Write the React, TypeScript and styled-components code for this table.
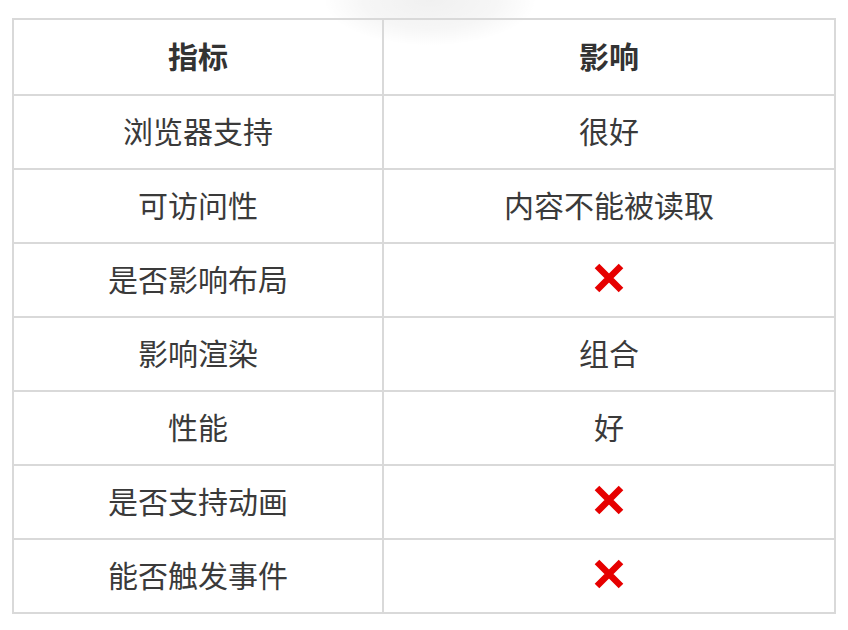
import * as React from 'react';
import styled, { createGlobalStyle } from 'styled-components';

const GlobalStyle = createGlobalStyle`
  html, body {
    margin: 0;
    padding: 0;
    background: #fff;
  }
  body {
    font-family: "Noto Sans CJK SC", "Noto Sans", sans-serif;
  }
`;

const Page = styled.div`
  position: relative;
  padding: 18px 12px 0 12px;
  width: 848px;
  box-sizing: border-box;
`;

// faint blurred shadow that peeks in at the top of the shot
const Glow = styled.div`
  position: absolute;
  left: 325px;
  top: -45px;
  width: 210px;
  height: 90px;
  border-radius: 50%;
  background: radial-gradient(ellipse at center, rgba(0, 0, 0, 0.06) 0%, rgba(0, 0, 0, 0.035) 45%, rgba(0, 0, 0, 0) 72%);
  pointer-events: none;
`;

const Table = styled.div`
  position: relative;
  display: grid;
  grid-template-columns: 370px 452px;
  width: 824px;
  box-sizing: border-box;
  border-top: 2px solid #d9d9d9;
  border-left: 2px solid #d9d9d9;
`;

const Cell = styled.div<{ $head?: boolean }>`
  display: flex;
  align-items: center;
  justify-content: center;
  height: ${p => (p.$head ? 76 : 74)}px;
  box-sizing: border-box;
  border-right: 2px solid #d9d9d9;
  border-bottom: 2px solid #d9d9d9;
  font-size: 30px;
  font-weight: ${p => (p.$head ? 700 : 400)};
  color: ${p => (p.$head ? '#333' : '#3a3a3a')};
  padding-bottom: 5px;
`;

const Cross = () => (
  <svg width='32' height='32' viewBox='0 0 32 32'>
    <path d='M4 4 L28 28 M28 4 L4 28' stroke='#e60000' strokeWidth='6.5' strokeLinecap='butt' />
  </svg>
);

const rows: [string, string | null][] = [
  ['浏览器支持', '很好'],
  ['可访问性', '内容不能被读取'],
  ['是否影响布局', null],
  ['影响渲染', '组合'],
  ['性能', '好'],
  ['是否支持动画', null],
  ['能否触发事件', null]
];

export default function App() {
  return (
    <Page>
      <GlobalStyle />
      <Glow />
      <Table>
        <Cell $head>指标</Cell>
        <Cell $head>影响</Cell>
        {rows.map(([k, v]) => (
          <React.Fragment key={k}>
            <Cell>{k}</Cell>
            <Cell>{v === null ? <Cross /> : v}</Cell>
          </React.Fragment>
        ))}
      </Table>
    </Page>
  );
}
